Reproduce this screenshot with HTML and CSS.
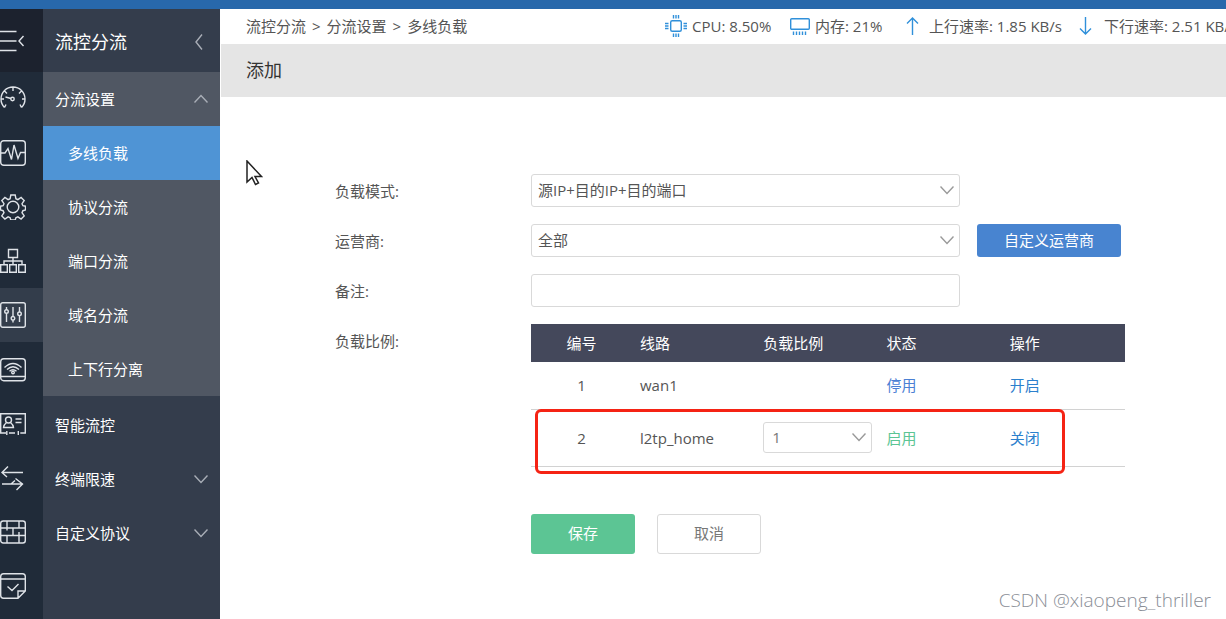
FILE: index.html
```html
<!DOCTYPE html>
<html lang="zh-CN">
<head>
<meta charset="utf-8">
<title>多线负载</title>
<link rel="stylesheet" href="styles.css">
</head>
<body>
<div class="brand-strip"></div>
<div class="app">
  <nav class="rail" aria-label="主导航">
    <button class="rail-toggle" aria-label="收起菜单"><svg width="26" height="26" viewBox="0 0 26 26"><path d="M0 3.500h16.500M0 13h16.500M0 22.500h16.500M23.500 8l-4.500 5 4.500 5"/></svg></button>
    <a class="rail-item" href="#" aria-label="概况"><svg width="26" height="26" viewBox="0 0 26 26"><path d="M4.500 21.500Q1 18 1 13a12 12 0 0 1 24 0q0 5-3.500 8.500M4.500 21.500l1.500-3M21.500 21.500l-1.500-3M13 1v4M4.500 5l2.500 2.500M21.500 5 19 7.500M1 13h3M22 13h3M5.500 11l5.500 1.500"/><circle cx="12.500" cy="13" r="1.700"/></svg></a>
    <a class="rail-item" href="#" aria-label="监控"><svg width="26" height="26" viewBox="0 0 26 26"><rect x=".7" y=".7" width="24.600" height="24.600" rx="3"/><path d="M1 13h4l3-4.500 3.500 11L14 5l4 13.500 2.500-6H25"/></svg></a>
    <a class="rail-item" href="#" aria-label="系统设置"><svg width="26" height="26" viewBox="0 0 26 26"><circle cx="13" cy="13" r="5.800"/><path d="M10.800 1h4.400l.7 3.700 2 .9 3.200-2.200 3.100 3.100-2.200 3.200.9 2 2.600.5v3.800l-2.600.7-.9 2 2.200 3.200-3.100 3.100-3.200-2.200-2 .9-.7 2.300h-4.400l-.7-2.300-2-.9-3.200 2.200-3.100-3.100L4 18.700l-.9-2-2.600-.7v-3.800l2.600-.5.9-2-2.200-3.200 3.100-3.100 3.200 2.200 2-.9z"/></svg></a>
    <a class="rail-item" href="#" aria-label="网络设置"><svg width="26" height="26" viewBox="0 0 26 26"><path d="M8.500 1.500h9v8h-9zM13 9.500v6.500M4 16.500v-3.500h18v3.500M.7 16.700h6.600v7.600H.7zM9.700 16.700h6.600v7.600H9.700zM18.700 16.700h6.600v7.600h-6.600z"/></svg></a>
    <a class="rail-item rail-item-active" href="#" aria-label="流控分流"><svg width="26" height="26" viewBox="0 0 26 26"><rect x=".7" y=".7" width="24.600" height="24.600" rx="2"/><path d="M6.500 5v3M6.500 11.500V20M13 5v9.500M13 18v2.500M19.500 5v5M19.500 13.500V20"/><circle cx="6.500" cy="9.500" r="1.800"/><circle cx="13" cy="16.300" r="1.800"/><circle cx="19.500" cy="11.800" r="1.800"/></svg></a>
    <div class="rail-group">
    <a class="rail-item" href="#" aria-label="无线"><svg width="26" height="26" viewBox="0 0 26 26"><rect x=".7" y="1.700" width="24.600" height="22" rx="3"/><path d="M1 19.500h24M4.500 10.500q8.500-8 17 0M7 12.500q6-5.500 12 0M9.500 14.300q3.500-3 7 0"/><circle cx="13" cy="15.500" r="1.300"/></svg></a>
    <a class="rail-item" href="#" aria-label="认证"><svg width="26" height="26" viewBox="0 0 26 26"><path d="M6 22H.7V2.700h24.600V22h-5M9 22h6M6.800 20v4M18.300 20v4M15.500 8h6M15.500 11.500h6"/><circle cx="8.500" cy="9" r="3"/><path d="M6.500 11.500Q3.500 14 3.500 16.500h10q0-2.500-3-5"/></svg></a>
    <a class="rail-item" href="#" aria-label="转发"><svg width="26" height="26" viewBox="0 0 26 26"><path d="M23 7.500H2M8 1.500l-6 6 5 4.500M2 19h21M15.500 13.500l7 5.500-6 6M11 19l4-3.500"/></svg></a>
    <a class="rail-item" href="#" aria-label="防火墙"><svg width="26" height="26" viewBox="0 0 26 26"><rect x=".7" y="2" width="24.600" height="22" rx="2.500"/><path d="M1 9h24M1 16.500h24M7 2v7M19 2v7M13 9v7.500M7 16.500V24M19 16.500V24M7 9v2.500M19 13v3.500"/></svg></a>
    <a class="rail-item" href="#" aria-label="日志"><svg width="26" height="26" viewBox="0 0 26 26"><path d="M18 25.300H3.500Q.7 25.300.7 22.500v-19Q.7.7 3.500.7h19q2.800 0 2.800 2.800V18zM18 25v-7h7M1 6h24M7.500 13.500l4.500 4 6.500-6.500"/></svg></a>
    </div>
  </nav>

  <aside class="sidebar">
    <div class="sidebar-title">流控分流<svg class="chev" width="14" height="18" viewBox="0 0 14 18"><path d="M9 1.500 3 9l6 7.500"/></svg></div>
    <a class="menu-item menu-open" href="#">分流设置<svg class="chev" width="14" height="10" viewBox="0 0 14 10"><path d="m.5 8.500 6.500-7 6.500 7"/></svg></a>
    <div class="submenu">
      <a class="menu-item sub-item sub-active" href="#">多线负载</a>
      <a class="menu-item sub-item" href="#">协议分流</a>
      <a class="menu-item sub-item" href="#">端口分流</a>
      <a class="menu-item sub-item" href="#">域名分流</a>
      <a class="menu-item sub-item" href="#">上下行分离</a>
    </div>
    <div class="menu-rest">
      <a class="menu-item" href="#">智能流控</a>
      <a class="menu-item" href="#">终端限速<svg class="chev" width="14" height="10" viewBox="0 0 14 10"><path d="m.5 1.500 6.500 7 6.500-7"/></svg></a>
      <a class="menu-item" href="#">自定义协议<svg class="chev" width="14" height="10" viewBox="0 0 14 10"><path d="m.5 1.500 6.500 7 6.500-7"/></svg></a>
    </div>
  </aside>

  <main class="content">
    <header class="topbar">
      <div class="breadcrumb"><span>流控分流</span><span>&gt;</span><span>分流设置</span><span>&gt;</span><span>多线负载</span></div>
      <div class="stats">
        <span class="stat"><svg width="22" height="22" viewBox="0 0 22 22"><rect x="5.700" y="5.700" width="10.600" height="10.600" rx="1.500"/><path d="M8.500 0v3.500M11 0v3.500M13.500 0v3.500M8.500 18.500V22M11 18.500V22M13.500 18.500V22M0 8.500h3.500M0 11h3.500M0 13.500h3.500M18.500 8.500H22M18.500 11H22M18.500 13.500H22"/></svg>CPU: 8.50%</span>
        <span class="stat"><svg width="20" height="20" viewBox="0 0 20 20"><rect x=".7" y="2.700" width="18.600" height="10.600" rx="1"/><path d="M3.500 15.500V19M6.500 15.500V19M9.500 15.500V19M12.500 15.500V19M15.500 15.500V19"/></svg>内存: 21%</span>
        <span class="stat stat-rate"><svg width="18" height="20" viewBox="0 0 18 20"><path d="M9.500 19V2M4 7.500 9.500 2 15 7.500"/></svg>上行速率: 1.85 KB/s</span>
        <span class="stat stat-rate"><svg width="18" height="20" viewBox="0 0 18 20"><path d="M7.500 1v17M2 12.500 7.500 18l5.500-5.500"/></svg>下行速率: 2.51 KB/s</span>
      </div>
    </header>
    <h1 class="page-title">添加</h1>

    <form class="form">
      <div class="row">
        <label class="label" for="mode">负载模式:</label>
        <div class="select-box field"><select id="mode"><option>源IP+目的IP+目的端口</option></select><svg width="14" height="10" viewBox="0 0 14 10"><path d="m.5 1.500 6.500 7 6.500-7"/></svg></div>
      </div>
      <div class="row">
        <label class="label" for="isp">运营商:</label>
        <div class="select-box field"><select id="isp"><option>全部</option></select><svg width="14" height="10" viewBox="0 0 14 10"><path d="m.5 1.500 6.500 7 6.500-7"/></svg></div>
        <button class="btn btn-blue" type="button">自定义运营商</button>
      </div>
      <div class="row">
        <label class="label" for="note">备注:</label>
        <input class="field note" id="note" type="text">
      </div>
      <div class="row row-top">
        <span class="label" id="ratio-label">负载比例:</span>
        <div class="table-box">
          <table class="lines" aria-labelledby="ratio-label">
            <thead><tr><th class="num">编号</th><th>线路</th><th>负载比例</th><th>状态</th><th>操作</th></tr></thead>
            <tbody>
              <tr><td class="num">1</td><td>wan1</td><td></td><td class="off">停用</td><td><a href="#">开启</a></td></tr>
              <tr class="tall"><td class="num">2</td><td>l2tp_home</td><td><div class="select-box ratio"><select aria-label="负载比例"><option>1</option></select><svg width="14" height="10" viewBox="0 0 14 10"><path d="m.5 1.500 6.500 7 6.500-7"/></svg></div></td><td class="on">启用</td><td><a href="#">关闭</a></td></tr>
            </tbody>
          </table>
          <div class="highlight"></div>
        </div>
      </div>
      <div class="actions">
        <button class="btn btn-save" type="button">保存</button>
        <button class="btn btn-cancel" type="button">取消</button>
      </div>
    </form>
    <svg class="pointer" width="17" height="26" viewBox="0 0 17 26"><path d="M1 1v21l5-4.500 3.500 7 3-1.500L9 16.500h6.500z"/></svg>
  </main>
</div>
<div class="watermark">CSDN @xiaopeng_thriller</div>
</body>
</html>
```
FILE: styles.css
```css
* { box-sizing: border-box; }
body {
  margin: 0;
  min-height: 100vh;
  display: flex;
  flex-direction: column;
  position: relative;
  background: #fff;
  color: #555;
  font: 15px/20px "Open Sans", "Noto Sans CJK SC", sans-serif;
}
a { color: inherit; text-decoration: none; }
button, input, select { font: inherit; color: inherit; }
svg { fill: none; flex: none; }

.brand-strip { height: 9px; background: #2868ab; }
.app { flex: 1; display: flex; }

.rail { width: 43px; flex: none; background: #202b39; }
.rail svg { stroke: #dfe3e8; stroke-width: 1.4; display: block; }
.rail-toggle {
  display: flex; align-items: center;
  width: 100%; height: 63px;
  padding: 0; border: 0;
  background: #1c222e;
}
.rail-item { display: flex; align-items: center; height: 54px; }
.rail-item-active { background: #333d4b; }
.rail-group { padding-top: 1px; }

.sidebar { width: 177px; flex: none; background: #343d4c; color: #fff; }
.sidebar-title {
  display: flex; align-items: center; justify-content: space-between;
  height: 63px; padding: 2px 13px 0 12px;
  font-size: 18px;
}
.chev { stroke: #a9aeb7; stroke-width: 1.4; }
.menu-item {
  display: flex; align-items: center; justify-content: space-between;
  height: 54px; padding: 0 12px;
}
.menu-open, .submenu { background: #505763; }
.sub-item { padding-left: 25px; }
.sub-active { background: #4f94d5; }
.menu-rest { padding-top: 2px; }

.content { flex: 1; min-width: 0; position: relative; }
.topbar {
  display: flex;
  height: 35px;
  padding-bottom: 2px;
  align-items: center;
  overflow: hidden;
  white-space: nowrap;
}
.breadcrumb { display: flex; gap: 6px; flex: none; width: 445px; padding-left: 26px; }
.stats { display: grid; grid-template-columns: 125px 113px 175px auto; }
.stat { display: flex; align-items: center; gap: 5px; }
.stat-rate { gap: 8px; }
.stat svg { stroke: #3090da; stroke-width: 1.4; }
.page-title {
  margin: 0 0 0 1px;
  padding: 13px 25px;
  background: #e5e5e5;
  color: #333;
  font-size: 18px; line-height: 27px; font-weight: 400;
}

.form { display: flex; flex-direction: column; gap: 17px; padding: 77px 16px 32px 115px; }
.row { display: flex; align-items: center; }
.row-top { align-items: flex-start; }
.label { width: 196px; flex: none; line-height: 34px; }
.row:not(.row-top) { height: 33px; }
.field { flex: 0 1 429px; min-width: 0; height: 33px; }
.select-box { position: relative; }
.select-box select {
  width: 100%; height: 100%;
  padding: 0 32px 2px 6px;
  appearance: none;
  border: 1px solid #d9d9d9; border-radius: 3px;
  background: #fff;
}
.select-box svg {
  position: absolute; right: 6px; top: 50%;
  margin-top: -6px;
  stroke: #999; stroke-width: 1.4;
  pointer-events: none;
}
.note { padding: 0 6px; border: 1px solid #d9d9d9; border-radius: 3px; background: #fff; }

.btn { height: 40px; padding: 0 0 2px; border: 0; border-radius: 3px; color: #fff; white-space: nowrap; }
.btn-blue { width: 144px; height: 33px; margin-left: 17px; background: #4884d0; }
.btn-save { width: 104px; background: #5cc594; }
.btn-cancel { width: 104px; border: 1px solid #d9d9d9; background: #fff; color: #777; }

.table-box { position: relative; flex: 0 1 594px; min-width: 0; }
.lines { width: 100%; border-collapse: collapse; table-layout: fixed; }
.lines th { height: 38px; background: #44485b; color: #fff; font-weight: 400; }
.lines th, .lines td { padding: 0 0 0 8px; text-align: left; }
.lines td { height: 47px; border-bottom: 1px solid #d2d2d2; }
.lines .tall td { height: 57px; }
.lines .num { width: 101px; padding: 0; text-align: center; }
.lines a { color: #2b80cd; }
.off { color: #4b80d4; }
.on { color: #5cc594; }
.ratio { width: 109px; height: 31px; }
.ratio select { padding-left: 8px; color: #777; }
.highlight {
  position: absolute; left: 4px; top: 85px; bottom: -7px;
  width: 530px;
  border: 3px solid #f52314; border-radius: 6px;
  pointer-events: none;
}

.actions { display: flex; gap: 22px; padding: 30px 0 0 196px; }

.pointer { position: absolute; left: 26px; top: 151px; fill: #fff; stroke: #222; stroke-width: 1.5; }
.watermark {
  position: absolute; right: 15px; bottom: 7px;
  color: #8a8e96;
  font-size: 19px; line-height: 24px; font-weight: 300;
}
```
